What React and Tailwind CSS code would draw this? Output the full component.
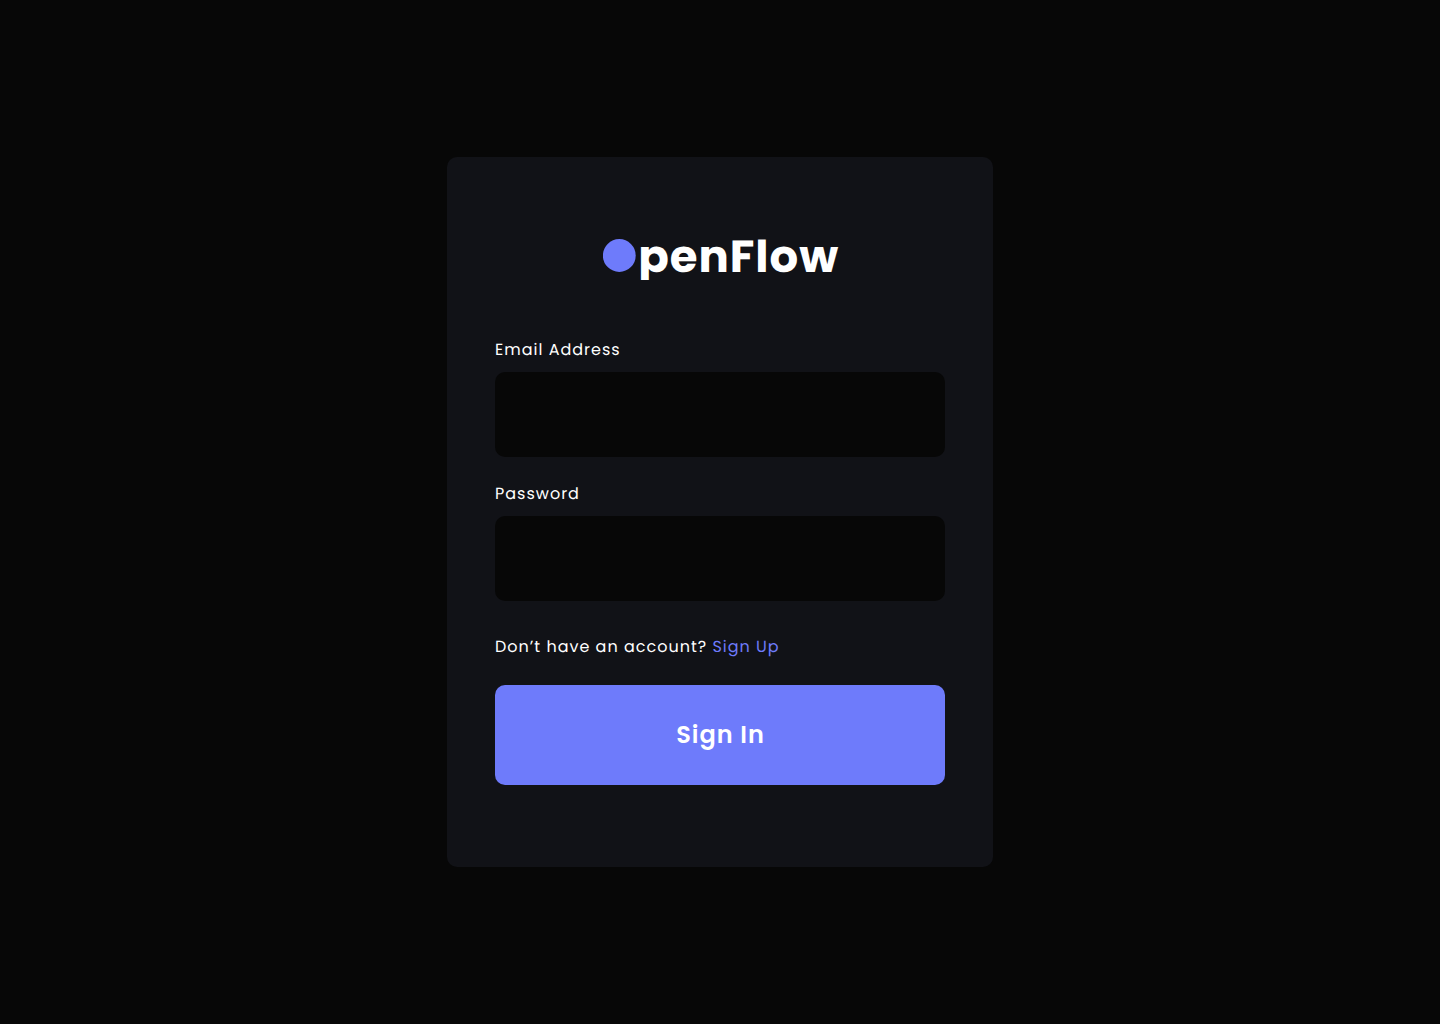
function Field({ label, type, id, className }) {
  return (
    <div className={className}>
      <label htmlFor={id} className="block h-6 text-base leading-6 tracking-[1px] whitespace-nowrap">{label}</label>
      <input id={id} type={type} className="mt-[10px] block h-[85px] w-full rounded-[10px] bg-[#070707] px-6 outline-none" />
    </div>
  );
}

export default function App() {
  return (
    <main className="flex min-h-screen items-center justify-center bg-[#070707] font-['Poppins','Open_Sans',sans-serif] text-white antialiased [text-rendering:geometricPrecision]">
      <form className="flex h-[710px] w-[546px] flex-col rounded-[10px] bg-[#111217] px-12 pt-[82px]">
        <h1 className="flex h-[53px] items-start gap-[2.6px] pl-[107.7px] text-[45px] leading-[33px] font-bold tracking-[0.95px]">
          <svg viewBox="0 0 33 33" className="h-[33px] w-[33px] shrink-0" aria-hidden="true">
            <circle cx="16.3" cy="16.5" r="16.4" fill="#6e7bfb" />
          </svg>
          <span className="h-[41px] translate-y-[0.5px] [clip-path:inset(0_0_0.5px_0)]">penFlow</span>
        </h1>
        <Field id="email" type="email" label="Email Address" className="mt-[46px]" />
        <Field id="password" type="password" label="Password" className="mt-[25px]" />
        <p className="mt-[34px] h-6 text-base leading-6 tracking-[1px] whitespace-nowrap">
          Don’t have an account? <a href="#" className="text-[#6e7bfb]">Sign Up</a>
        </p>
        <button type="button" className="mt-[26px] h-[100px] w-full rounded-[10px] bg-[#6e7bfb] pl-px text-2xl font-semibold tracking-[1px]">Sign In</button>
      </form>
    </main>
  );
}
